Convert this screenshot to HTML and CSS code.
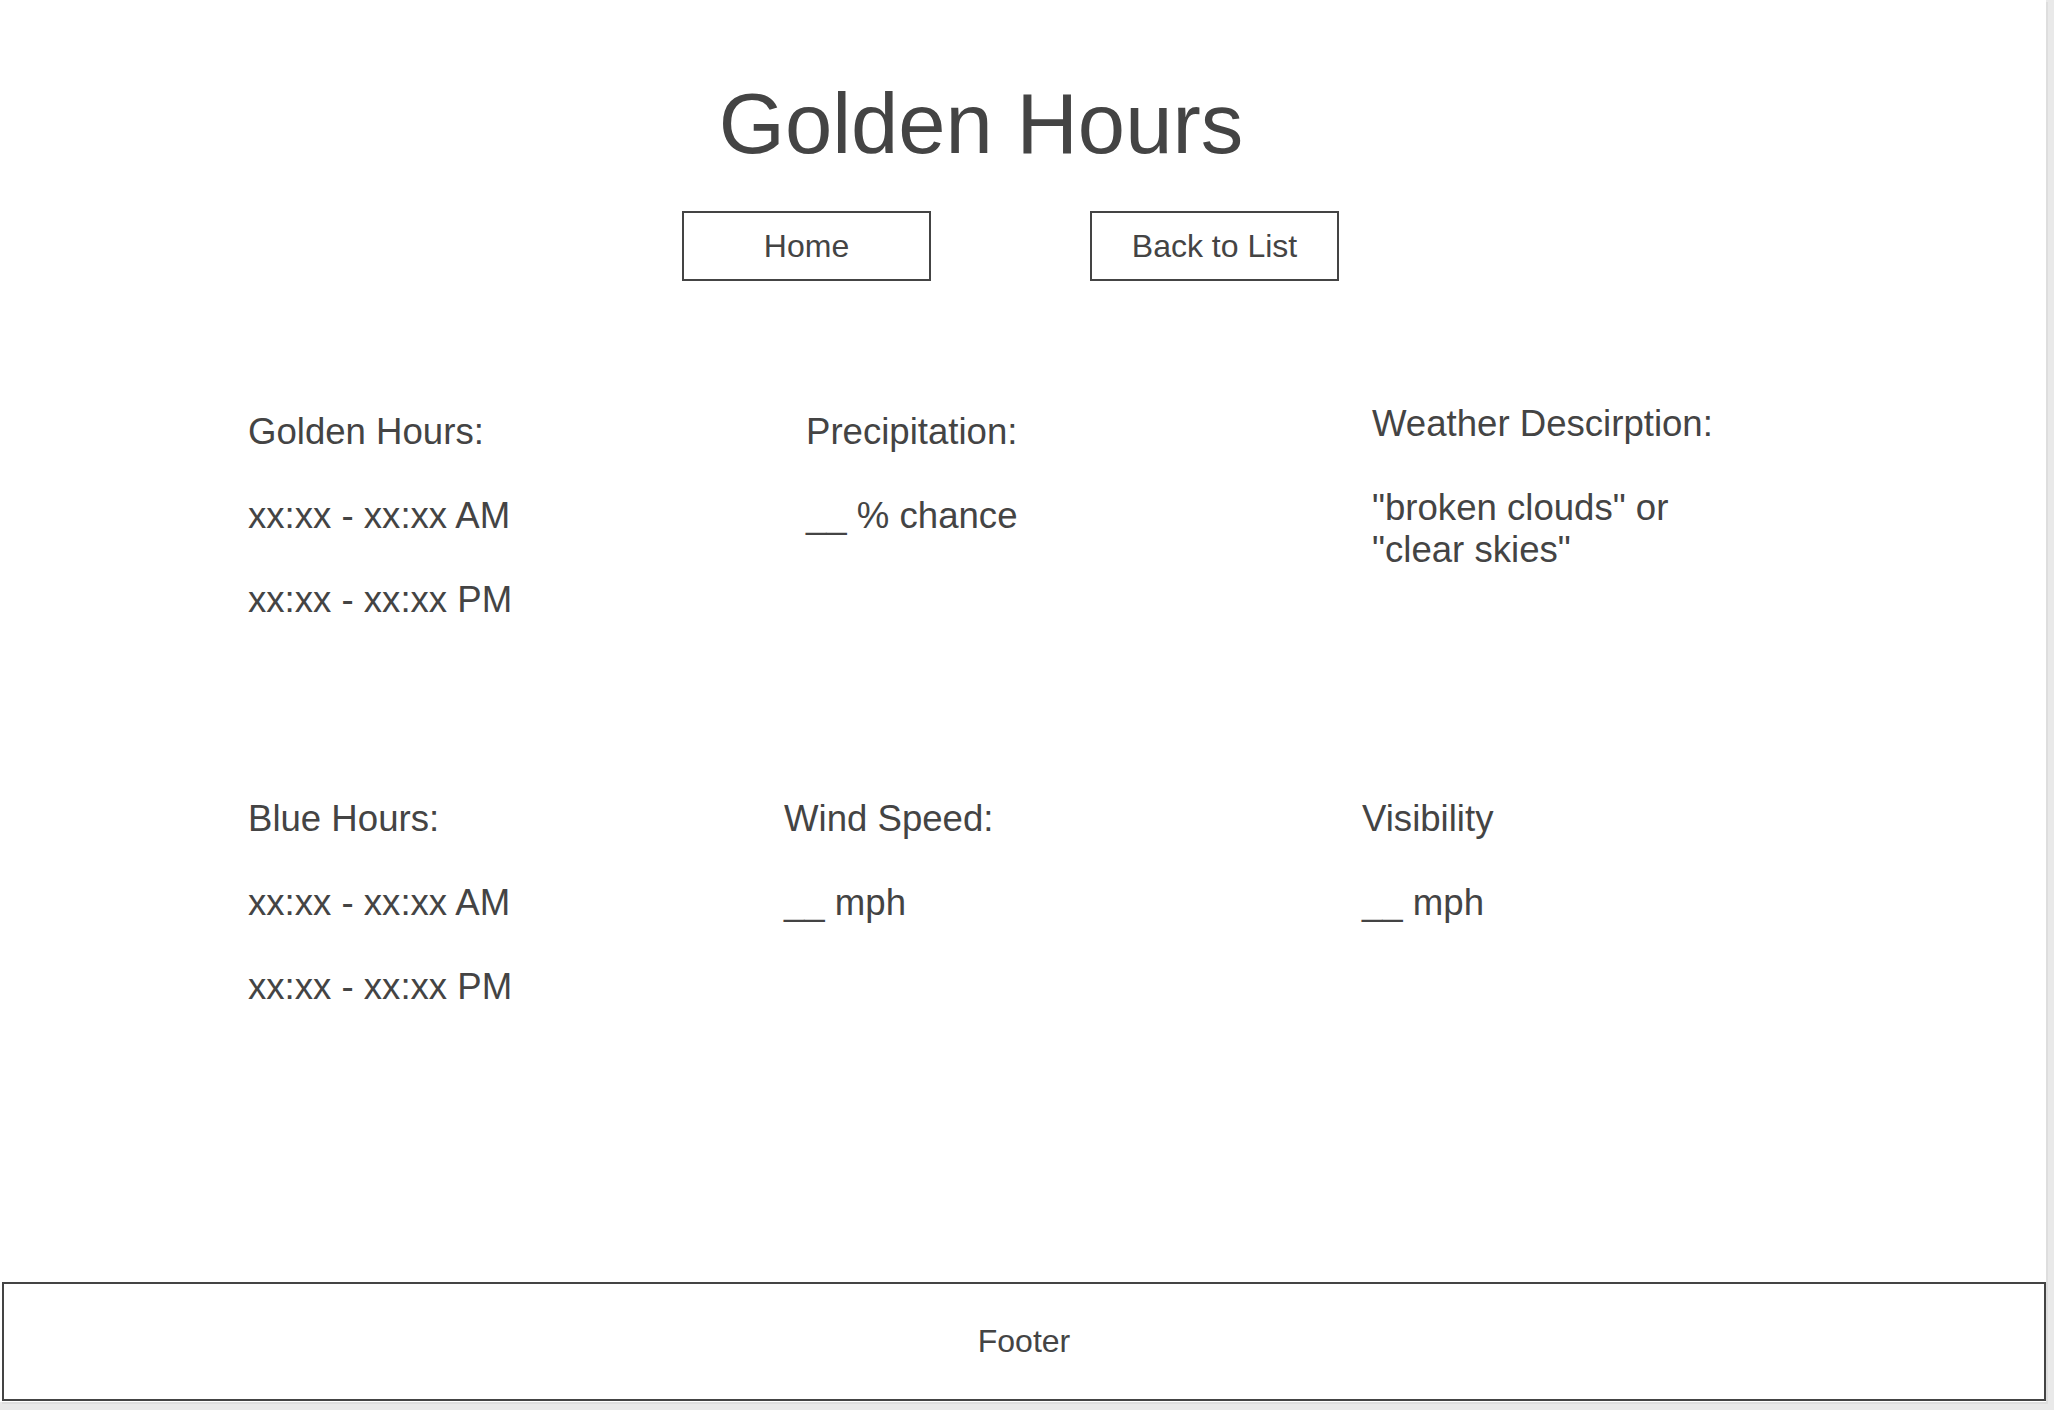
FILE: index.html
```html
<!DOCTYPE html>
<html lang="en">
<head>
<meta charset="utf-8">
<title>Golden Hours</title>
<link rel="stylesheet" href="styles.css">
</head>
<body>
<div class="page">
  <header class="header">
    <h1 class="title">Golden Hours</h1>
    <nav class="nav">
      <a class="btn" href="#">Home</a>
      <a class="btn" href="#">Back to List</a>
    </nav>
  </header>

  <main class="content">
    <section class="row row--top">
      <div class="col col--a">
        <p class="line">Golden Hours:</p>
        <p class="line">xx:xx - xx:xx AM</p>
        <p class="line">xx:xx - xx:xx PM</p>
      </div>
      <div class="col col--b">
        <p class="line">Precipitation:</p>
        <p class="line">__ % chance</p>
      </div>
      <div class="col col--desc">
        <p class="desc-line">Weather Descirption:</p>
        <p class="desc-line desc-body">"broken clouds" or<br>"clear skies"</p>
      </div>
    </section>

    <section class="row row--bottom">
      <div class="col col--a2">
        <p class="line">Blue Hours:</p>
        <p class="line">xx:xx - xx:xx AM</p>
        <p class="line">xx:xx - xx:xx PM</p>
      </div>
      <div class="col col--b2">
        <p class="line">Wind Speed:</p>
        <p class="line">__ mph</p>
      </div>
      <div class="col">
        <p class="line">Visibility</p>
        <p class="line">__ mph</p>
      </div>
    </section>
  </main>

  <footer class="footer">Footer</footer>
</div>
</body>
</html>
```

FILE: styles.css
```css
html, body {
  margin: 0;
  padding: 0;
}

body {
  background: #e9e9e9;
  font-family: "Liberation Sans", Arial, sans-serif;
  color: #444444;
  width: 2054px;
  height: 1410px;
  overflow: hidden;
}

.page {
  width: 2046px;
  height: 1402px;
  background: #ffffff;
  box-shadow: 2px 2px 0 #dedede;
  display: flex;
  flex-direction: column;
}

.header {
  display: flex;
  flex-direction: column;
}

.title {
  margin: 74px 0 0 0;
  padding-right: 84px;
  font-size: 85px;
  line-height: 100px;
  font-weight: normal;
  text-align: center;
}

.nav {
  display: flex;
  gap: 159px;
  padding-left: 682px;
  margin-top: 37px;
}

.btn {
  box-sizing: border-box;
  width: 249px;
  height: 70px;
  border: 2px solid #444444;
  display: flex;
  align-items: center;
  justify-content: center;
  font-size: 32px;
  color: #444444;
  text-decoration: none;
}

.content {
  padding-left: 248px;
  display: flex;
  flex-direction: column;
}

.row {
  display: flex;
  align-items: flex-start;
}

.row--top {
  margin-top: 121px;
}

.row--bottom {
  margin-top: 171px;
}

.col {
  display: flex;
  flex-direction: column;
  gap: 36px;
}

.col--a { width: 558px; padding-top: 6px; }
.col--b { width: 566px; padding-top: 6px; }
.col--a2 { width: 536px; }
.col--b2 { width: 578px; }

.col--desc {
  gap: 42px;
  padding-top: 1px;
}

.line {
  margin: 0;
  font-size: 36.6px;
  line-height: 48px;
  white-space: nowrap;
}

.desc-line {
  margin: 0;
  font-size: 36.6px;
  line-height: 42px;
  white-space: nowrap;
}

.footer {
  box-sizing: border-box;
  margin: auto 0 1px 2px;
  width: 2044px;
  height: 119px;
  border: 2px solid #444444;
  display: flex;
  align-items: center;
  justify-content: center;
  font-size: 32px;
}
```
